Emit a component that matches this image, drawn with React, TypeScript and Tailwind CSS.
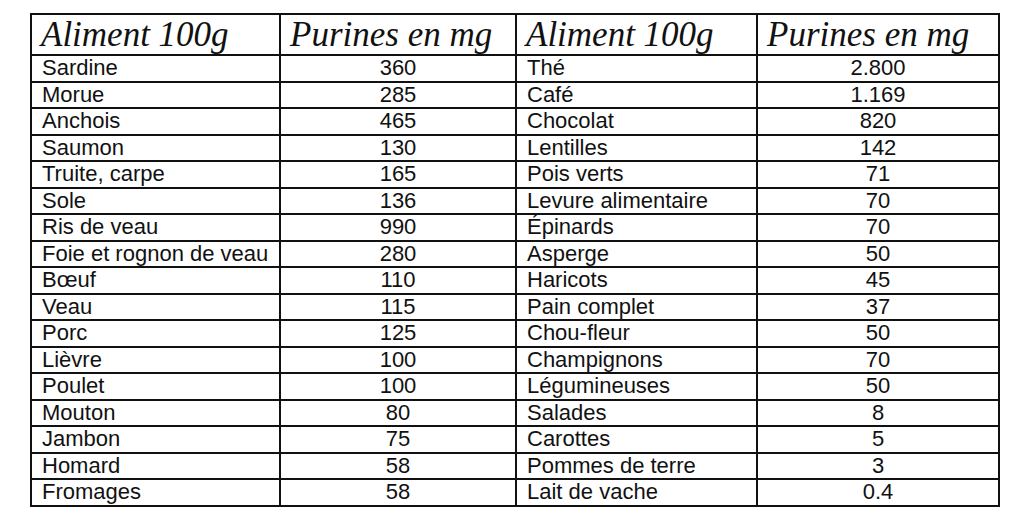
const left: [string, string][] = [
  ['Sardine', '360'],
  ['Morue', '285'],
  ['Anchois', '465'],
  ['Saumon', '130'],
  ['Truite, carpe', '165'],
  ['Sole', '136'],
  ['Ris de veau', '990'],
  ['Foie et rognon de veau', '280'],
  ['Bœuf', '110'],
  ['Veau', '115'],
  ['Porc', '125'],
  ['Lièvre', '100'],
  ['Poulet', '100'],
  ['Mouton', '80'],
  ['Jambon', '75'],
  ['Homard', '58'],
  ['Fromages', '58'],
]

const right: [string, string][] = [
  ['Thé', '2.800'],
  ['Café', '1.169'],
  ['Chocolat', '820'],
  ['Lentilles', '142'],
  ['Pois verts', '71'],
  ['Levure alimentaire', '70'],
  ['Épinards', '70'],
  ['Asperge', '50'],
  ['Haricots', '45'],
  ['Pain complet', '37'],
  ['Chou-fleur', '50'],
  ['Champignons', '70'],
  ['Légumineuses', '50'],
  ['Salades', '8'],
  ['Carottes', '5'],
  ['Pommes de terre', '3'],
  ['Lait de vache', '0.4'],
]

export default function App() {
  return (
    <div className="w-[1024px] h-[526px] bg-white pt-[13px] pl-[30px] text-[#111]">
      <table className="border-collapse table-fixed w-[968px] font-['Liberation_Sans',Arial,sans-serif]">
        <colgroup>
          <col className="w-[249px]" />
          <col className="w-[236px]" />
          <col className="w-[241px]" />
          <col className="w-[242px]" />
        </colgroup>
        <thead>
          <tr className="h-[41px]">
            {['Aliment 100g', 'Purines en mg', 'Aliment 100g', 'Purines en mg'].map((h, i) => (
              <th
                key={i}
                className="border-2 border-[#111] px-[9px] text-left align-middle font-normal italic text-[35px] leading-none font-['Liberation_Serif',Georgia,serif]"
              >
                {h}
              </th>
            ))}
          </tr>
        </thead>
        <tbody>
          {left.map((row, i) => (
            <tr key={i} className="h-[26.5px]">
              <td className="border-2 border-[#111] px-[10px] py-0 text-[22px] leading-none">{row[0]}</td>
              <td className="border-2 border-[#111] py-0 text-center text-[22px] leading-none">{row[1]}</td>
              <td className="border-2 border-[#111] px-[10px] py-0 text-[22px] leading-none">{right[i][0]}</td>
              <td className="border-2 border-[#111] py-0 text-center text-[22px] leading-none">{right[i][1]}</td>
            </tr>
          ))}
        </tbody>
      </table>
    </div>
  )
}
